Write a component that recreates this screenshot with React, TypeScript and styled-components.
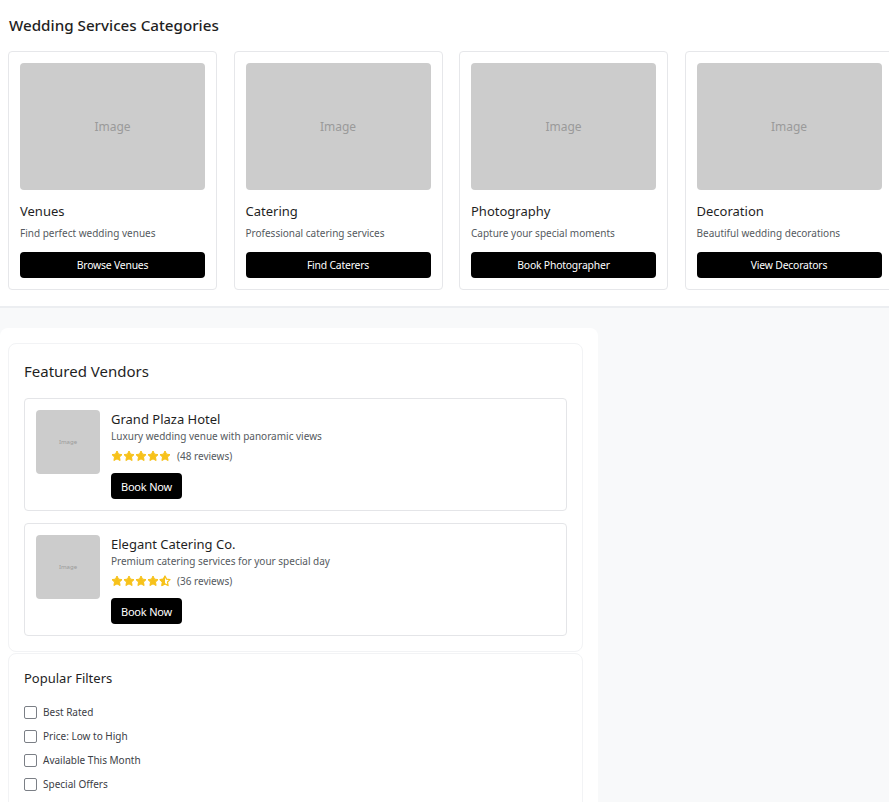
import React from "react";
import styled, { createGlobalStyle } from "styled-components";

const Global = createGlobalStyle`
  html, body { margin: 0; padding: 0; background: #f8f9fa; }
  body { font-family: "Noto Sans", "Open Sans", sans-serif; color: #212529; overflow: hidden; }
  * { box-sizing: border-box; }
`;

const Top = styled.section`
  background: #fff;
  padding: 8px 8px 16px;
  border-bottom: 2px solid #eceef1;
  overflow: hidden;
`;

const PageTitle = styled.h2`
  margin: 6px 0 15px 1px;
  font-size: 15.2px;
  line-height: 22px;
  font-weight: 500;
  color: #1f1f1f;
`;

const CardRow = styled.div`
  display: flex;
  gap: 16.5px;
`;

const CatCard = styled.div`
  flex: 0 0 209px;
  border: 1px solid #e6e7ea;
  border-radius: 4px;
  padding: 11px;
  display: flex;
  flex-direction: column;
`;

const Placeholder = styled.div<{ $h: number; $fs: number }>`
  height: ${(p) => p.$h}px;
  background: #cccccc;
  border-radius: 4px;
  display: flex;
  align-items: center;
  justify-content: center;
  color: #9a9a9a;
  font-size: ${(p) => p.$fs}px;
`;

const CatTitle = styled.div`
  margin-top: 12px;
  font-size: 13px;
  line-height: 18px;
  color: #1f1f1f;
  font-weight: 400;
`;

const CatDesc = styled.div`
  margin-top: 5px;
  font-size: 10px;
  line-height: 16px;
  color: #555a60;
`;

const BlackButton = styled.button<{ $full?: boolean }>`
  margin-top: ${(p) => (p.$full ? "11px" : "10px")};
  height: 26px;
  width: ${(p) => (p.$full ? "100%" : "71px")};
  background: #000;
  color: #fff;
  border: none;
  border-radius: 4px;
  font-family: inherit;
  font-size: ${(p) => (p.$full ? "10.4px" : "11px")};
  letter-spacing: -0.2px;
  padding: 0;
`;

const Lower = styled.div`
  padding-top: 20px;
`;

const Panel = styled.div`
  width: 598px;
  background: #fff;
  border-radius: 8px;
  padding: 15px 15px 0 8px;
  min-height: 480px;
`;

const SubCard = styled.div`
  border: 1px solid #f2f3f5;
  border-radius: 8px;
  padding: 15px;
  margin-bottom: 1px;
`;

const SubTitle = styled.h3<{ $size: number; $lh: number }>`
  margin: 0;
  font-size: ${(p) => p.$size}px;
  line-height: ${(p) => p.$lh}px;
  font-weight: 400;
  color: #1f1f1f;
`;

const VendorList = styled.div`
  margin-top: 15px;
  display: flex;
  flex-direction: column;
  gap: 12px;
`;

const VendorCard = styled.div`
  border: 1px solid #e4e5e8;
  border-radius: 4px;
  padding: 11px;
  display: flex;
  gap: 11px;
  align-items: flex-start;
`;

const Thumb = styled(Placeholder)`
  width: 64px;
  flex: 0 0 64px;
`;

const VendorInfo = styled.div`
  display: flex;
  flex-direction: column;
`;

const VendorName = styled.div`
  font-size: 13px;
  line-height: 18px;
  color: #1f1f1f;
`;

const VendorDesc = styled.div`
  font-size: 10px;
  line-height: 16px;
  color: #555a60;
`;

const RatingRow = styled.div`
  margin-top: 5px;
  display: flex;
  align-items: center;
  gap: 6px;
  height: 14px;
  font-size: 10px;
  color: #555a60;
`;

const Stars = styled.div`
  display: flex;
`;

const FilterList = styled.div`
  margin-top: 13px;
  display: flex;
  flex-direction: column;
`;

const FilterRow = styled.label`
  display: flex;
  align-items: center;
  gap: 6px;
  height: 24px;
  font-size: 10px;
  color: #3c4046;
`;

const Box = styled.span`
  width: 13px;
  height: 13px;
  border: 1.5px solid #7b7f86;
  border-radius: 2px;
  background: #fff;
`;

const STAR = "M12 2l3.09 6.26L22 9.27l-5 4.87 1.18 6.88L12 17.77l-6.18 3.25L7 14.14 2 9.27l6.91-1.01L12 2z";

const Star: React.FC<{ kind: "full" | "half" }> = ({ kind }) => (
  <svg width="12" height="12" viewBox="0 0 24 24">
    <defs>
      <clipPath id="halfclip">
        <rect x="0" y="0" width="12" height="24" />
      </clipPath>
    </defs>
    {kind === "full" ? (
      <path d={STAR} fill="#f7c21a" stroke="#f7c21a" strokeWidth="2" strokeLinejoin="round" />
    ) : (
      <>
        <path d={STAR} fill="none" stroke="#f7c21a" strokeWidth="2.5" strokeLinejoin="round" />
        <path d={STAR} fill="#f7c21a" clipPath="url(#halfclip)" stroke="#f7c21a" strokeWidth="2" />
      </>
    )}
  </svg>
);

const categories = [
  { title: "Venues", desc: "Find perfect wedding venues", btn: "Browse Venues" },
  { title: "Catering", desc: "Professional catering services", btn: "Find Caterers" },
  { title: "Photography", desc: "Capture your special moments", btn: "Book Photographer" },
  { title: "Decoration", desc: "Beautiful wedding decorations", btn: "View Decorators" },
];

const vendors = [
  { name: "Grand Plaza Hotel", desc: "Luxury wedding venue with panoramic views", rating: 5, reviews: 48 },
  { name: "Elegant Catering Co.", desc: "Premium catering services for your special day", rating: 4.5, reviews: 36 },
];

const filters = ["Best Rated", "Price: Low to High", "Available This Month", "Special Offers"];

export default function App() {
  return (
    <>
      <Global />
      <Top>
        <PageTitle>Wedding Services Categories</PageTitle>
        <CardRow>
          {categories.map((c) => (
            <CatCard key={c.title}>
              <Placeholder $h={127} $fs={12}>Image</Placeholder>
              <CatTitle>{c.title}</CatTitle>
              <CatDesc>{c.desc}</CatDesc>
              <BlackButton $full>{c.btn}</BlackButton>
            </CatCard>
          ))}
        </CardRow>
      </Top>
      <Lower>
        <Panel>
          <SubCard>
            <SubTitle $size={15} $lh={24}>Featured Vendors</SubTitle>
            <VendorList>
              {vendors.map((v) => (
                <VendorCard key={v.name}>
                  <Thumb $h={64} $fs={6}>Image</Thumb>
                  <VendorInfo>
                    <VendorName>{v.name}</VendorName>
                    <VendorDesc>{v.desc}</VendorDesc>
                    <RatingRow>
                      <Stars>
                        {[0, 1, 2, 3, 4].map((i) => (
                          <Star key={i} kind={i < Math.floor(v.rating) ? "full" : "half"} />
                        ))}
                      </Stars>
                      <span>({v.reviews} reviews)</span>
                    </RatingRow>
                    <BlackButton>Book Now</BlackButton>
                  </VendorInfo>
                </VendorCard>
              ))}
            </VendorList>
          </SubCard>
          <SubCard>
            <SubTitle $size={13} $lh={18}>Popular Filters</SubTitle>
            <FilterList>
              {filters.map((f) => (
                <FilterRow key={f}>
                  <Box />
                  {f}
                </FilterRow>
              ))}
            </FilterList>
          </SubCard>
        </Panel>
      </Lower>
    </>
  );
}
